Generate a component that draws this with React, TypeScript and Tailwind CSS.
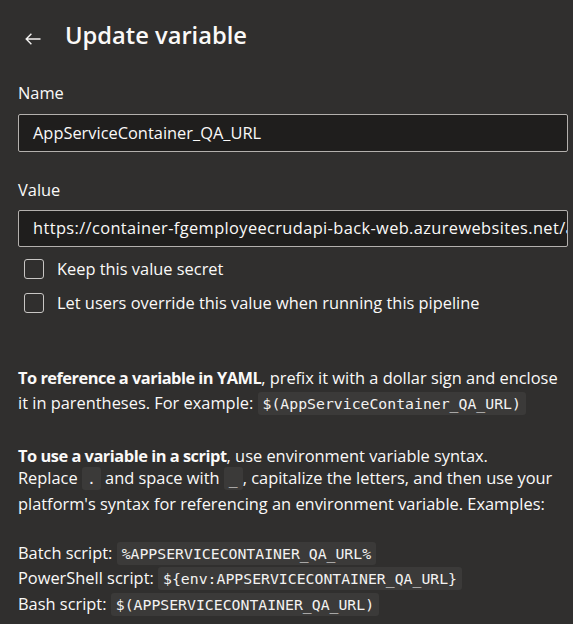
import React from "react";

function Code({ children }: { children: React.ReactNode }) {
  return (
    <code className="inline-block align-baseline h-[23px] pt-[2px] leading-[20px] rounded-[3px] bg-[#3b3a39] px-[5px] text-[14.8px] font-['DejaVu_Sans_Mono',monospace] text-[#f3f2f1] whitespace-pre">
      {children}
    </code>
  );
}

function Checkbox({ label }: { label: string }) {
  return (
    <div className="flex items-center h-[20px]">
      <div className="ml-[6px] w-[20px] h-[20px] rounded-[3px] border border-[#c8c6c4]" />
      <span className="ml-[13px] leading-[20px] whitespace-nowrap">{label}</span>
    </div>
  );
}

function Line({ h, children, className = "" }: { h: string; children: React.ReactNode; className?: string }) {
  return <div className={`${h} leading-[25px] whitespace-nowrap ${className}`}>{children}</div>;
}

export default function App() {
  return (
    <div className="w-[573px] h-[624px] overflow-hidden bg-[#302f2e] text-[#faf9f8] pl-[18px] pt-[19px] text-[16.4px] font-['Open_Sans',sans-serif]">
      <div className="flex items-center h-[32px]">
        <svg width="16" height="12" viewBox="0 0 16 12" className="ml-[7px] mt-[7px]">
          <path d="M15.5 6H1.2M6.4 0.8L1.2 6l5.2 5.2" stroke="#f3f2f1" strokeWidth="1.4" fill="none" />
        </svg>
        <h1 className="ml-[24px] text-[23.7px] leading-[32px] font-semibold">Update variable</h1>
      </div>

      <div className="mt-[30px] leading-[24px]">Name</div>
      <div className="mt-[9px] w-[550px] h-[38px] bg-[#1f1e1d] border border-[#b3b0ad] rounded-[2px] flex items-center pl-[14px] whitespace-nowrap">
        AppServiceContainer_QA_URL
      </div>

      <div className="mt-[26px] leading-[24px]">Value</div>
      <div className="mt-[8px] w-[550px] h-[37px] bg-[#1f1e1d] border border-[#b3b0ad] rounded-[2px] flex items-center pl-[14px] overflow-hidden whitespace-nowrap tracking-[0.38px]">
        https://container-fgemployeecrudapi-back-web.azurewebsites.net/api/
      </div>

      <div className="mt-[12px] flex flex-col gap-[14px]">
        <Checkbox label="Keep this value secret" />
        <Checkbox label="Let users override this value when running this pipeline" />
      </div>

      <div className="mt-[52px]">
        <Line h="h-[25px]">
          <b className="font-bold tracking-[-0.5px]">To reference a variable in YAML</b>, prefix it with a dollar sign and enclose
        </Line>
        <Line h="h-[25px]">
          it in parentheses. For example: <Code>$(AppServiceContainer_QA_URL)</Code>
        </Line>

        <Line h="h-[22px]" className="mt-[28px]">
          <b className="font-bold tracking-[-0.48px]">To use a variable in a script</b>, use environment variable syntax.
        </Line>
        <Line h="h-[26px]">
          Replace <Code>.</Code> and space with <Code>_</Code>, capitalize the letters, and then use your
        </Line>
        <Line h="h-[25px]">platform's syntax for referencing an environment variable. Examples:</Line>

        <Line h="h-[25px]" className="mt-[24px]">
          Batch script: <Code>%APPSERVICECONTAINER_QA_URL%</Code>
        </Line>
        <Line h="h-[26px]">
          PowerShell script: <Code>{"${env:APPSERVICECONTAINER_QA_URL}"}</Code>
        </Line>
        <Line h="h-[25px]">
          Bash script: <Code>$(APPSERVICECONTAINER_QA_URL)</Code>
        </Line>
      </div>
    </div>
  );
}
